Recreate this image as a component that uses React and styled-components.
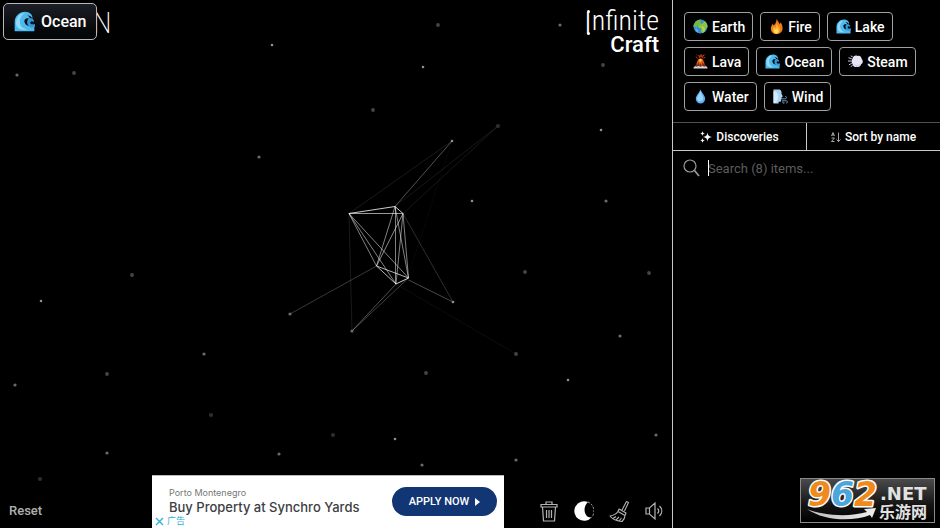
import React, { useState } from 'react';
import styled, { createGlobalStyle } from 'styled-components';

const STARS = [
  [272, 45, 1], [17, 75, 2], [74, 73, 3], [373, 110, 3], [423, 67, 1], [438, 25, 3], [560, 25, 2],
  [603, 65, 3], [601, 130, 1], [472, 201, 1], [606, 201, 2], [259, 157, 2], [132, 275, 3],
  [41, 301, 1], [204, 354, 2], [107, 374, 3], [15, 385, 2], [211, 415, 4], [333, 435, 4],
  [107, 453, 2], [279, 454, 2], [40, 479, 4], [395, 439, 1], [422, 465, 2], [516, 460, 2],
  [426, 373, 3], [568, 380, 1], [620, 336, 2], [649, 273, 3], [525, 272, 3], [656, 435, 2],
  [452, 141, 1], [498, 126, 4], [290, 314, 2], [352, 331, 2], [453, 302, 1], [516, 354, 3],
];

const STAR_STYLES = {
  1: { r: 1.3, fill: '#8f8f8f' },
  2: { r: 1.6, fill: '#6a6a6a' },
  3: { r: 1.9, fill: '#464646' },
  4: { r: 2.1, fill: '#2e2e2e' },
};

// x1, y1, x2, y2, opacity
const LINKS = [
  [349, 213.5, 395, 206.5, 0.8], [349, 213.5, 403, 213.5, 0.6], [395, 206.5, 403, 213.5, 0.8],
  [349, 213.5, 376.5, 266, 0.5], [349, 213.5, 396, 284, 0.5], [349, 213.5, 408.5, 278, 0.5],
  [395, 206.5, 376.5, 266, 0.5], [395.5, 206.5, 395.5, 284, 0.5], [395, 206.5, 408.5, 278, 0.5],
  [403, 213.5, 376.5, 266, 0.55], [403, 213.5, 396, 284, 0.5], [403, 213.5, 408.5, 278, 0.5],
  [376.5, 266, 396, 284, 0.7], [376.5, 266, 408.5, 278, 0.7], [396, 284, 408.5, 278, 0.8],
  [395, 206.5, 452, 141, 0.32], [349, 213.5, 452, 141, 0.1], [395, 206.5, 498, 126, 0.09],
  [403, 213.5, 498, 126, 0.09], [403, 213.5, 453, 302, 0.18], [408.5, 280, 453, 302, 0.28],
  [376.5, 266, 290, 314, 0.22], [349, 213.5, 352, 331, 0.1], [396, 284, 352, 331, 0.32],
  [408.5, 278, 352, 331, 0.25], [396, 284, 516, 354, 0.05], [410, 270, 452, 141, 0.03],
];

const ITEMS = ['Earth', 'Fire', 'Lake', 'Lava', 'Ocean', 'Steam', 'Water', 'Wind'];

const Wave = () => (
  <>
    <path d="M1 31V17C1 8 8 1 17 1c7 0 12 5 11 10-2-3-5-5-8-4 3 1 4 3 4 5-3-2-7-1-8 2-1 4 3 9 8 9 4 0 7-2 7-2v10Z" fill="#4fb8ec" />
    <path d="M3 17C4 9 9 3 16 3c-5 4-8 9-7 15s5 9 11 10C9 30 2 25 3 17Z" fill="#8ddafa" />
    <path d="M20 17c0-4 3-7 6-6 3 0 5 3 4 6-2-2-4-2-5 0-1 3 3 4 7 3v4c-6 3-12-1-12-7Z" fill="#2f9bd8" />
  </>
);

const ICONS = {
  Earth: (
    <>
      <circle cx="16" cy="16" r="15" fill="#348fd8" />
      <path d="M3 10C6 3 13 0 18 2l-3 4 3 3-4 4-5 1-1 5-4-3-3 1c0-3 0-5 2-7Z" fill="#78b83f" />
      <path d="M14 12l7-3 3-5c5 3 7 8 7 13l-4 3-2 7-5 3-3-5 1-5-6-2-2-3Z" fill="#8cc63f" />
      <path d="M18 16l5 1 3 4-2 4-3 2 0-6-4-3Z" fill="#c9cf48" />
      <path d="M5 20l5 3 1 6C7 27 5 24 5 20Z" fill="#63b2e8" />
    </>
  ),
  Fire: (
    <>
      <path d="M16 0c3 5 5 7 7 11l2-4c3 5 4 9 4 13 0 7-6 12-13 12S4 27 4 20c0-4 2-7 4-10l2 4c4-4 6-8 6-14Z" fill="#ef7d1b" />
      <path d="M16 9c1 5 6 6 7 12 1 5-2 10-7 10s-9-4-8-9c0-3 2-5 3-7l2 4c2-3 3-6 3-10Z" fill="#ffad29" />
      <path d="M17 18c0 3 3 4 3 8 0 3-2 5-4 5s-5-2-5-5 1-4 2-5l1 2c2-1 3-3 3-5Z" fill="#ffe35a" />
    </>
  ),
  Lake: <Wave />,
  Lava: (
    <>
      <path d="M11 11 4 27h24l-7-16Z" fill="#7b2e1c" />
      <path d="M11 12c2-3 8-3 10 0l3 8-2 1-2-4-1 9-3-7-2 5-2-7-3 6-1-3Z" fill="#e85f1c" />
      <path d="M13 12c2-2 5-2 6 0l-2 4-3 1Z" fill="#ffc93a" />
      <path d="M15 9 12 3l4 3 1-5 1 5 5-4-4 7M10 9 6 6M22 9l4-2M9 3 7 1M24 3l2-2" stroke="#c8431c" strokeWidth="2" fill="none" />
      <path d="M1 31c0-5 4-6 7-4 3-3 6-1 8 0 3-2 6-2 8 0 4-2 7 0 7 4Z" fill="#d7d5d5" />
    </>
  ),
  Ocean: <Wave />,
  Steam: (
    <>
      <path d="M10 9c1-5 6-7 10-5 5-2 9 2 9 6 4 4 3 10-1 12-1 5-6 7-10 5-4 2-8-1-8-5-3-3-3-9 0-13Z" fill="#e6e5f7" />
      <path d="M13 21c4 4 10 3 14-2-1 5-5 8-9 7-3 0-5-2-5-5Z" fill="#d2d1ec" />
      <path d="M8 10C5 10 4 8 1 8M8 15H0M8 20c-3 0-3 3-6 3M10 24l-4 3M10 6 6 4" stroke="#d4d3ec" strokeWidth="2" fill="none" />
    </>
  ),
  Water: (
    <>
      <path d="M16 1c3 8 10 13 10 20a10 10 0 0 1-20 0C6 14 13 9 16 1Z" fill="#5caef0" />
      <path d="M16 3c1 7 6 11 6 17a7 7 0 0 1-13 3c-2-7 6-12 7-20Z" fill="#9ad3fb" />
    </>
  ),
  Wind: (
    <>
      <path d="M1 1h13c4 2 5 6 4 9l3 6-3 2 1 3-2 2c1 4-1 5-5 4v4H1Z" fill="#a9d2f3" />
      <path d="M1 5c6 0 9 4 10 9s-1 10-5 16H1Z" fill="#d4eafb" />
      <path d="M19 21h7c4 0 4-6 0-5M19 25h9c4 0 4 5 0 5M19 28h3c3 0 2 4 0 3" stroke="#6e93b5" strokeWidth="2" fill="none" />
    </>
  ),
};

const Emoji = ({ name, size }) => (
  <svg width={size} height={size} viewBox="0 0 32 32" aria-hidden="true">{ICONS[name]}</svg>
);

const Watermark = () => (
  <WatermarkSvg viewBox="0 0 135 45" role="img" aria-label="962.NET">
    <defs>
      <linearGradient id="plate" x1="0" y1="0" x2="0" y2="1">
        <stop offset="0" stopColor="#4c4c4c" />
        <stop offset="0.6" stopColor="#141414" />
        <stop offset="1" stopColor="#000" />
      </linearGradient>
      <linearGradient id="swoosh" x1="0" y1="0" x2="1" y2="0">
        <stop offset="0" stopColor="#bbb" />
        <stop offset="1" stopColor="#eee" />
      </linearGradient>
    </defs>
    <rect x="0.5" y="0.5" width="134" height="44" fill="url(#plate)" stroke="#8a8a8a" />
    <path d="M7 31c17 7 43 8 60 3l-3-3 12-1-4 10-2-3c-18 7-46 6-63-6Z" fill="url(#swoosh)" />
    <g fontFamily='"DejaVu Sans", "Noto Sans CJK SC", sans-serif' fontWeight="700">
      <g fontSize="33" fontStyle="italic" stroke="#fff" strokeWidth="3" paintOrder="stroke" strokeLinejoin="round">
        <text x="8" y="28" fill="#f08a1d">9</text>
        <text x="31" y="28" fill="#4ba6dc">6</text>
        <text x="54" y="28" fill="#f08a1d">2</text>
      </g>
      <text x="80" y="22" fontSize="18" fill="#e2e2e2">.NET</text>
      <text x="79" y="40" fontSize="16" fill="#e2e2e2">乐游网</text>
    </g>
  </WatermarkSvg>
);

export default function App() {
  const [query, setQuery] = useState('');

  const visible = ITEMS.filter(item => item.toLowerCase().includes(query.toLowerCase()));

  return (
    <Root>
      <GlobalStyle />
      <Main>
        <Sky aria-hidden="true">
          {LINKS.map(([x1, y1, x2, y2, o], i) => (
            <line key={i} x1={x1} y1={y1} x2={x2} y2={y2} stroke="#fff" strokeOpacity={o} />
          ))}
          {STARS.map(([x, y, kind], i) => (
            <circle key={i} cx={x} cy={y} {...STAR_STYLES[kind]} />
          ))}
        </Sky>
        <Header>
          <SiteName href="#home">N</SiteName>
          <Title>
            <TitleTop><TallI>I</TallI>nfinite</TitleTop>
            <TitleBottom>Craft</TitleBottom>
          </Title>
        </Header>
        <Instance type="button"><Emoji name="Ocean" size={21} />Ocean</Instance>
        <Footer>
          <Reset type="button">Reset</Reset>
          <Ad>
            <div>
              <AdBrand>Porto Montenegro</AdBrand>
              <AdTitle>Buy Property at Synchro Yards</AdTitle>
            </div>
            <AdLink href="#apply">
              APPLY NOW
              <svg width="5" height="8" viewBox="0 0 5 8" aria-hidden="true"><path d="M0 0 5 4 0 8Z" fill="#fff" /></svg>
            </AdLink>
            <AdBadge>
              <svg width="9" height="9" viewBox="0 0 9 9" aria-hidden="true"><path d="M1 1 8 8M8 1 1 8" stroke="#2fb2d6" strokeWidth="1.4" /></svg>
              广告
            </AdBadge>
          </Ad>
          <Tools>
            <Tool type="button" aria-label="Delete">
              <svg viewBox="0 0 20 22" fill="none" stroke="#b4b4b4" strokeWidth="1.2">
                <path d="M2 4.500h16v2.500H2ZM7 4.500V2h6v2.500M3.500 7l1 14h11l1-14M7.500 10v8M10 10v8M12.500 10v8" />
              </svg>
            </Tool>
            <Tool type="button" aria-label="Dark mode">
              <svg viewBox="0 0 20 22">
                <path d="M14 2A9.800 9.800 0 1 0 17.500 17.500C11 18.500 7.500 8 14 2Z" fill="#fff" />
                <path d="M14 2a9.800 9.800 0 0 1 3.500 15.500" fill="none" stroke="#bbb" strokeDasharray="2 1.500" />
              </svg>
            </Tool>
            <Tool type="button" aria-label="Clear">
              <svg viewBox="0 0 20 22" fill="none" stroke="#b4b4b4" strokeWidth="1.1" strokeLinejoin="round">
                <path d="M13 10 17.500 1.500l2 1L15.500 11M10 9l7 4-1 2.500L9 11.500ZM9 11.500c-2 3-5 4-8 4.500 2 3 7 5 12 5.500 2-2 3-4 3-6M4 18.500l3-2M7 20l3-3M10 21l2.500-3" />
              </svg>
            </Tool>
            <Tool type="button" aria-label="Sound">
              <svg viewBox="0 0 20 22" fill="none" stroke="#b4b4b4" strokeWidth="1.200">
                <path d="M2 8h3.500l5.500-5v16l-5.500-5H2ZM5.500 8v6M13.500 8.500c1.500 1.500 1.500 3.500 0 5M15.500 6c3 3 3 7 0 10" />
              </svg>
            </Tool>
          </Tools>
        </Footer>
      </Main>
      <Sidebar>
        <Items>
          {visible.map(item => (
            <Item key={item} type="button"><Emoji name={item} size={15} />{item}</Item>
          ))}
        </Items>
        <Sorts>
          <Sort type="button">
            <svg width="12" height="12" viewBox="0 0 12 12" fill="#fff" aria-hidden="true">
              <path d="M7.500 1.500c.4 3 1.500 4 4.500 4.500-3 .5-4.100 1.500-4.500 4.500C7.100 7.500 6 6.500 3 6c3-.5 4.100-1.500 4.500-4.500ZM2.500 0c.2 1.500.8 2.200 2.500 2.500C3.300 2.800 2.700 3.500 2.500 5 2.300 3.500 1.700 2.800 0 2.500 1.700 2.200 2.300 1.500 2.500 0ZM2.500 7c.2 1.500.8 2.200 2.500 2.500-1.700.3-2.300 1-2.500 2.500-.2-1.500-.8-2.200-2.500-2.500 1.700-.3 2.300-1 2.500-2.500Z" />
            </svg>
            Discoveries
          </Sort>
          <Sort type="button">
            <svg width="10" height="10" viewBox="0 0 10 10" fill="none" stroke="#ccc" strokeWidth="0.800" aria-hidden="true">
              <path d="M.5 4 2 .5 3.500 4M1 3h2M.5 6h3l-3 3.500h3M7.500 .5v9M5.500 7.500l2 2 2-2" />
            </svg>
            Sort by name
          </Sort>
        </Sorts>
        <SearchRow>
          <svg width="17" height="18" viewBox="0 0 17 18" fill="none" stroke="#999" strokeWidth="1.200" aria-hidden="true">
            <circle cx="7" cy="7" r="6" />
            <path d="M11.500 11.500 16 17" strokeWidth="1.800" />
          </svg>
          <SearchField>
            {!query && <Caret />}
            <SearchInput
              type="text"
              aria-label="Search items"
              placeholder={`Search (${ITEMS.length}) items...`}
              value={query}
              onChange={e => setQuery(e.target.value)}
            />
          </SearchField>
        </SearchRow>
        <Watermark />
      </Sidebar>
    </Root>
  );
}

const GlobalStyle = createGlobalStyle`
  * {
    box-sizing: border-box;
  }

  body {
    margin: 0;
    background: #000;
    color: #fff;
    font-family: Roboto, "Noto Sans CJK SC", sans-serif;
  }

  button, input {
    margin: 0;
    font-family: inherit;
    color: inherit;
  }

  svg {
    display: block;
    flex-shrink: 0;
  }
`;

const Root = styled.div`
  display: flex;
  min-height: 100vh;
`;

const Main = styled.main`
  position: relative;
  flex: 1;
  min-width: 0;
  display: flex;
  flex-direction: column;
  justify-content: space-between;
`;

const Sky = styled.svg`
  position: absolute;
  inset: 0;
  width: 100%;
  height: 100%;
`;

const Header = styled.header`
  position: relative;
  display: flex;
  justify-content: space-between;
  align-items: flex-start;
  padding: 8px 13px 0 93px;
`;

const SiteName = styled.a`
  color: #fff;
  text-decoration: none;
  font-family: "Roboto Condensed", Roboto, sans-serif;
  font-size: 30px;
  font-weight: 200;
  line-height: 30px;
`;

const Title = styled.h1`
  margin: 0;
  text-align: right;
  font-weight: 500;
`;

const TitleTop = styled.div`
  height: 26px;
  font-family: "Roboto Condensed", Roboto, sans-serif;
  font-size: 28px;
  font-weight: 300;
  line-height: 26px;
`;

// the first letter runs down past the baseline, with a dot on each end
const TallI = styled.span`
  position: relative;
  font-size: 32px;
  line-height: 26px;
  vertical-align: -4px;

  &::before, &::after {
    content: '';
    position: absolute;
    left: 3px;
    width: 3px;
    height: 3px;
    border-radius: 50%;
    background: #fff;
  }

  &::before {
    top: 6px;
  }

  &::after {
    bottom: 7px;
  }
`;

const TitleBottom = styled.div`
  font-size: 22px;
  line-height: 22px;
`;

const Chip = styled.button`
  display: flex;
  align-items: center;
  font-weight: 500;
  cursor: pointer;
`;

const Instance = styled(Chip)`
  position: absolute;
  left: 3px;
  top: 3px;
  height: 37px;
  gap: 6px;
  padding: 0 10px;
  font-size: 16px;
  border: 1px solid #b8b8b8;
  border-radius: 5px;
  background: linear-gradient(#1c1f27, #050608 80%);
`;

const Item = styled(Chip)`
  height: 29px;
  gap: 4px;
  padding: 0 7px 0 8px;
  font-size: 14px;
  border: 1px solid #a0a0a0;
  border-radius: 4px;
  background: #000;
`;

const Footer = styled.footer`
  position: relative;
  display: grid;
  grid-template-columns: 1fr auto 168px;
  align-items: end;
`;

const Reset = styled.button`
  justify-self: start;
  padding: 0 9px 9px;
  border: 0;
  background: none;
  color: #b0b0b0;
  font-size: 13px;
  font-weight: 500;
  line-height: 16px;
  cursor: pointer;
`;

const Ad = styled.aside`
  position: relative;
  display: flex;
  justify-content: space-between;
  align-items: flex-start;
  width: 352px;
  height: 53px;
  padding: 11px 7px 0 17px;
  background: #fff;
  border-top: 1px solid #bbb;
`;

const AdBrand = styled.div`
  color: #777;
  font-family: Inter, sans-serif;
  font-size: 9px;
  line-height: 12px;
`;

const AdTitle = styled.div`
  color: #3c4043;
  font-family: Inter, sans-serif;
  font-size: 13px;
  font-weight: 500;
  line-height: 16px;
`;

const AdLink = styled.a`
  display: flex;
  align-items: center;
  justify-content: center;
  gap: 6px;
  width: 105px;
  height: 29px;
  border-radius: 15px;
  background: #123574;
  color: #fff;
  font-size: 11px;
  font-weight: 500;
  text-decoration: none;
`;

const AdBadge = styled.div`
  position: absolute;
  left: 3px;
  bottom: 1px;
  display: flex;
  align-items: center;
  gap: 3px;
  color: #2fb2d6;
  font-size: 9px;
  line-height: 12px;
`;

const Tools = styled.div`
  display: flex;
  justify-content: flex-end;
  gap: 15px;
  padding: 0 8px 6px 0;
`;

const Tool = styled.button`
  padding: 0;
  border: 0;
  background: none;
  cursor: pointer;

  svg {
    width: 20px;
    height: 22px;
  }
`;

const Sidebar = styled.aside`
  position: relative;
  flex: 0 0 268px;
  border-left: 1px solid #c8c8c8;
`;

const Items = styled.div`
  display: flex;
  flex-wrap: wrap;
  gap: 6px 7px;
  padding: 12px 11px 11px;
`;

const Sorts = styled.div`
  display: flex;
  border-top: 1px solid #505050;
  border-bottom: 1px solid #c8c8c8;
`;

const Sort = styled.button`
  flex: 1;
  display: flex;
  align-items: center;
  justify-content: center;
  gap: 4px;
  height: 27px;
  padding: 0;
  border: 0;
  background: none;
  font-size: 12px;
  font-weight: 500;
  cursor: pointer;

  & + & {
    border-left: 1px solid #c8c8c8;
  }
`;

const SearchRow = styled.div`
  display: flex;
  align-items: center;
  gap: 8px;
  padding: 8px 10px;
`;

const SearchField = styled.div`
  position: relative;
  flex: 1;
`;

const Caret = styled.span`
  position: absolute;
  left: 0;
  top: 1px;
  width: 1px;
  height: 16px;
  background: #fff;
`;

const SearchInput = styled.input`
  display: block;
  width: 100%;
  height: 18px;
  padding: 0;
  border: 0;
  outline: 0;
  background: transparent;
  font-size: 13px;

  &::placeholder {
    color: #5c5c5c;
  }
`;

const WatermarkSvg = styled.svg`
  position: absolute;
  right: 5px;
  bottom: 5px;
  width: 135px;
  height: 45px;
  overflow: visible;
`;
